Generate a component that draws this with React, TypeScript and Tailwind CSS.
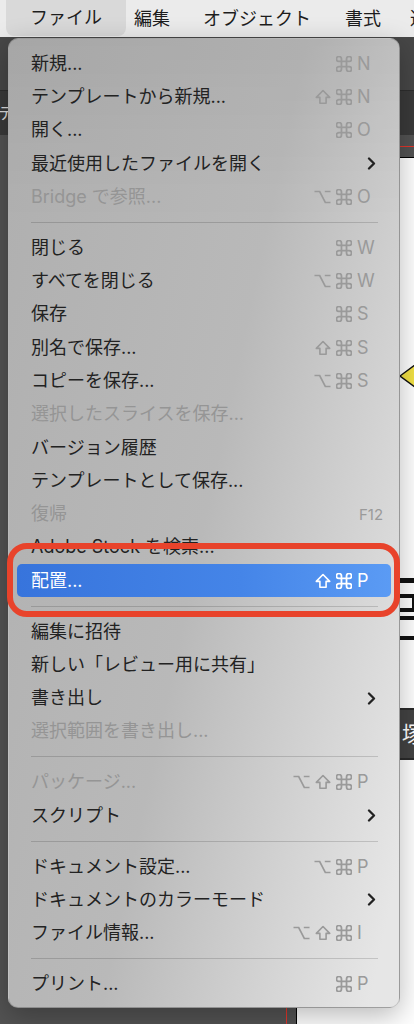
import React from "react";

type Mod = "cmd" | "shift" | "opt";
type Item =
  | "sep"
  | {
      label: string;
      mods?: Mod[];
      k?: string;
      sub?: boolean;
      disabled?: boolean;
      active?: boolean;
      small?: boolean;
    };

const items: Item[] = [
  { label: "新規...", mods: ["cmd"], k: "N" },
  { label: "テンプレートから新規...", mods: ["shift", "cmd"], k: "N" },
  { label: "開く...", mods: ["cmd"], k: "O" },
  { label: "最近使用したファイルを開く", sub: true },
  { label: "Bridge で参照...", mods: ["opt", "cmd"], k: "O", disabled: true },
  "sep",
  { label: "閉じる", mods: ["cmd"], k: "W" },
  { label: "すべてを閉じる", mods: ["opt", "cmd"], k: "W" },
  { label: "保存", mods: ["cmd"], k: "S" },
  { label: "別名で保存...", mods: ["shift", "cmd"], k: "S" },
  { label: "コピーを保存...", mods: ["opt", "cmd"], k: "S" },
  { label: "選択したスライスを保存...", disabled: true },
  { label: "バージョン履歴" },
  { label: "テンプレートとして保存..." },
  { label: "復帰", k: "F12", disabled: true, small: true },
  { label: "Adobe Stock を検索..." },
  { label: "配置...", mods: ["shift", "cmd"], k: "P", active: true },
  "sep",
  { label: "編集に招待" },
  { label: "新しい「レビュー用に共有」" },
  { label: "書き出し", sub: true },
  { label: "選択範囲を書き出し...", disabled: true },
  "sep",
  { label: "パッケージ...", mods: ["opt", "shift", "cmd"], k: "P", disabled: true },
  { label: "スクリプト", sub: true },
  "sep",
  { label: "ドキュメント設定...", mods: ["opt", "cmd"], k: "P" },
  { label: "ドキュメントのカラーモード", sub: true },
  { label: "ファイル情報...", mods: ["opt", "shift", "cmd"], k: "I" },
  "sep",
  { label: "プリント...", mods: ["cmd"], k: "P" },
];

function ModIcon({ m }: { m: Mod }) {
  if (m === "cmd")
    return (
      <svg width="16" height="16" viewBox="2.5 2.5 19 19" fill="none" stroke="currentColor" strokeWidth="2.1">
        <path d="M15 6v12a3 3 0 1 0 3-3H6a3 3 0 1 0 3 3V6a3 3 0 1 0-3 3h12a3 3 0 1 0-3-3" />
      </svg>
    );
  if (m === "shift")
    return (
      <svg width="16" height="16" viewBox="0 0 16 16" fill="none" stroke="currentColor" strokeWidth="1.6" strokeLinejoin="round">
        <path d="M8 1.5L1.3 8.4h3.6v5.8h6.2V8.4h3.6z" />
      </svg>
    );
  return (
    <svg width="17" height="14" viewBox="0 0 17 14" fill="none" stroke="currentColor" strokeWidth="1.7">
      <path d="M0.5 1.5h5.2l5.6 11h5.2M10.8 1.5h5.7" />
    </svg>
  );
}

function Chevron() {
  return (
    <svg width="9" height="13" viewBox="0 0 9 13" fill="none" stroke="#222" strokeWidth="2.3" strokeLinecap="round" strokeLinejoin="round">
      <path d="M2 1.5l5 5-5 5" />
    </svg>
  );
}

function Row({ it }: { it: Exclude<Item, "sep"> }) {
  const labelColor = it.active ? "text-white" : it.disabled ? "text-[#959595]" : "text-[#222222]";
  const scColor = it.active ? "text-white" : "text-[#9a9a9a]";
  return (
    <div
      className={
        "h-[33.3px] flex items-center pl-[14px] pr-[6px] rounded-[5px] " +
        (it.active ? "bg-[linear-gradient(90deg,#3774dc_0%,#4585e8_60%,#5b9bf4_100%)]" : "")
      }
    >
      <div className={"flex-1 whitespace-nowrap " + labelColor}>{it.label}</div>
      <div className={"flex items-center gap-[5px] " + scColor}>
        {(it.mods || []).map((m, i) => (
          <ModIcon key={i} m={m} />
        ))}
      </div>
      <div className={"w-[28px] ml-[5px] flex items-center " + scColor}>
        {it.sub ? (
          <span className="pl-[10px] flex">
            <Chevron />
          </span>
        ) : it.k ? (
          <span className={it.small ? "text-[15px] pl-[2px]" : "text-[18px]"}>{it.k}</span>
        ) : null}
      </div>
    </div>
  );
}

export default function App() {
  return (
    <div className="relative w-[414px] h-[1024px] overflow-hidden font-['Inter','Noto_Sans_CJK_JP',sans-serif] text-[18px] leading-none bg-[#535353]">
      {/* macOS menu bar */}
      <div className="h-[37px] bg-[#ebebeb] flex items-center text-[#1d1d1d] whitespace-nowrap overflow-hidden">
        <div className="ml-[6px] h-[36px] self-start rounded-b-[8px] bg-[#d9d9d9] px-[24px] flex items-center">ファイル</div>
        <span className="ml-[8px]">編集</span>
        <span className="ml-[33px]">オブジェクト</span>
        <span className="ml-[34px]">書式</span>
        <span className="ml-[29px]">選択</span>
      </div>

      {/* app window behind */}
      <div className="flex flex-col h-[987px]">
        <div className="h-[53px] bg-[#474747] shrink-0" />
        <div className="h-[45px] shrink-0 bg-[#3a3a3a] border-t border-[#2e2e2e] flex items-center text-[16px] text-[#dddddd] whitespace-nowrap">
          <span className="-ml-[2px]">テ</span>
        </div>
        <div className="flex-1 bg-[#535353] pl-[286px] pt-[11px] flex">
          <div className="flex-1 border-l border-t border-[#e2362b] pl-[9px] pt-[10px] flex">
            <div className="relative flex-1 bg-white border-l border-t border-black">
              <svg className="absolute left-[102px] top-[202px]" width="20" height="32" viewBox="0 0 20 32">
                <path d="M1 16L20 2v28z" fill="#f3e245" stroke="#111" strokeWidth="1.5" />
              </svg>
              <svg className="absolute left-[103px] top-[420px]" width="20" height="70" viewBox="0 0 20 70">
                <rect x="0" y="0" width="20" height="5" fill="#111" />
                <path d="M0 18h14v14H0" fill="none" stroke="#111" strokeWidth="4" />
                <rect x="0" y="38" width="20" height="4" fill="#111" />
                <rect x="0" y="58" width="20" height="4" fill="#111" />
              </svg>
              <div className="absolute left-[103px] top-[550px] w-[30px] h-[52px] bg-[#434343] border-y-2 border-[#2a2a2a] flex items-center text-white text-[22px] pl-[2px]">
                塚
              </div>
            </div>
          </div>
        </div>
      </div>

      {/* dropdown menu */}
      <div className="absolute left-[8px] top-[38px] w-[392px] rounded-[10px] border border-black/15 pt-[8px] pb-[6px] px-[8px] shadow-[0_8px_28px_rgba(0,0,0,0.28)] bg-[linear-gradient(180deg,rgba(0,0,0,0.05)_0px,rgba(0,0,0,0)_180px),linear-gradient(102deg,#afafaf_0%,#b9b9b9_50%,#d2d2d2_75%,#e6e6e6_95%)]">
        {items.map((it, i) =>
          it === "sep" ? (
            <div key={i} className="h-[17.6px] flex items-center pl-[14px] pr-[13px]">
              <div className="h-px w-full bg-black/15" />
            </div>
          ) : (
            <Row key={i} it={it} />
          )
        )}
      </div>

      {/* red annotation */}
      <div className="absolute left-[7px] top-[543px] w-[393px] h-[74px] rounded-[20px] border-[6px] border-[#e8432b]" />
    </div>
  );
}
